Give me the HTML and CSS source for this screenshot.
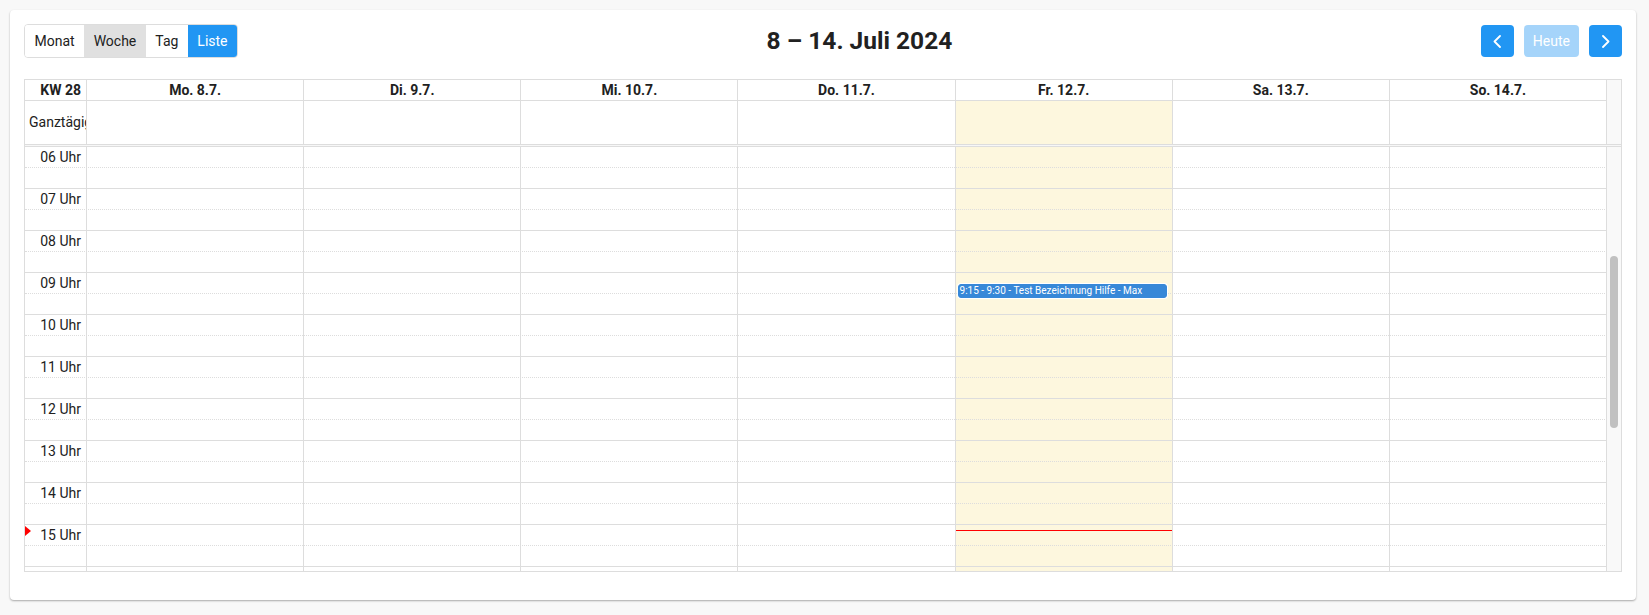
FILE: index.html
```html
<!DOCTYPE html>
<html lang="de">
<head>
<meta charset="utf-8">
<title>Kalender</title>
<link rel="stylesheet" href="styles.css">
</head>
<body>
<div class="page">
  <div class="card">
    <div class="toolbar">
      <div class="btn-group">
        <button class="vbtn">Monat</button>
        <button class="vbtn active">Woche</button>
        <button class="vbtn">Tag</button>
        <button class="vbtn primary">Liste</button>
      </div>
      <h2 class="title">8 – 14. Juli 2024</h2>
      <div class="nav">
        <button class="nbtn icon" aria-label="zurück"><svg width="8" height="13" viewBox="0 0 8 13"><polyline points="7,1 1.5,6.5 7,12" fill="none" stroke="#fff" stroke-width="1.8" stroke-linecap="round" stroke-linejoin="round"/></svg></button>
        <button class="nbtn heute" disabled>Heute</button>
        <button class="nbtn icon" aria-label="vor"><svg width="8" height="13" viewBox="0 0 8 13"><polyline points="1,1 6.5,6.5 1,12" fill="none" stroke="#fff" stroke-width="1.8" stroke-linecap="round" stroke-linejoin="round"/></svg></button>
      </div>
    </div>

    <div class="cal">
      <div class="head">
        <div class="head-gutter"></div>
        <div class="hcell axis">KW 28</div>
        <div class="hcell">Mo. 8.7.</div>
        <div class="hcell">Di. 9.7.</div>
        <div class="hcell">Mi. 10.7.</div>
        <div class="hcell">Do. 11.7.</div>
        <div class="hcell">Fr. 12.7.</div>
        <div class="hcell">Sa. 13.7.</div>
        <div class="hcell">So. 14.7.</div>
        <div class="acell axis">Ganztägig</div>
        <div class="acell"></div>
        <div class="acell"></div>
        <div class="acell"></div>
        <div class="acell"></div>
        <div class="acell today"></div>
        <div class="acell"></div>
        <div class="acell"></div>
      </div>
      <div class="divider"></div>
      <div class="body">
        <div class="slots">
          <div class="cols">
            <div class="col axis-col"><div class="now-arrow"></div></div>
            <div class="col"></div>
            <div class="col"></div>
            <div class="col"></div>
            <div class="col"></div>
            <div class="col today">
              <div class="event">9:15 - 9:30 - Test Bezeichnung Hilfe - Max</div>
              <div class="now-line"></div>
            </div>
            <div class="col"></div>
            <div class="col"></div>
          </div>
          <div class="lines">
            <div class="slot"><div class="label">06 Uhr</div></div>
            <div class="slot half"></div>
            <div class="slot"><div class="label">07 Uhr</div></div>
            <div class="slot half"></div>
            <div class="slot"><div class="label">08 Uhr</div></div>
            <div class="slot half"></div>
            <div class="slot"><div class="label">09 Uhr</div></div>
            <div class="slot half"></div>
            <div class="slot"><div class="label">10 Uhr</div></div>
            <div class="slot half"></div>
            <div class="slot"><div class="label">11 Uhr</div></div>
            <div class="slot half"></div>
            <div class="slot"><div class="label">12 Uhr</div></div>
            <div class="slot half"></div>
            <div class="slot"><div class="label">13 Uhr</div></div>
            <div class="slot half"></div>
            <div class="slot"><div class="label">14 Uhr</div></div>
            <div class="slot half"></div>
            <div class="slot"><div class="label">15 Uhr</div></div>
            <div class="slot half"></div>
            <div class="slot"></div>
          </div>
        </div>
        <div class="scroll-gutter"><div class="thumb"></div></div>
      </div>
    </div>
  </div>
</div>
</body>
</html>
```

FILE: styles.css
```css
* { box-sizing: border-box; }

html, body {
  margin: 0;
  padding: 0;
  background: #f8f8f8;
  font-family: Roboto, "Liberation Sans", Arial, sans-serif;
  color: #212121;
}

.page {
  padding: 10px;
}

.card {
  width: 1626px;
  background: #fff;
  border-radius: 4px;
  box-shadow: 0 1px 2px rgba(0, 0, 0, 0.32);
  padding: 14px 14px 28px;
}

/* Toolbar */
.toolbar {
  display: flex;
  justify-content: space-between;
  align-items: center;
  height: 34px;
  margin-bottom: 21px;
}

.btn-group {
  display: flex;
  height: 34px;
  border: 1px solid #ddd;
  border-radius: 4px;
  overflow: hidden;
}

.vbtn {
  font-family: inherit;
  font-size: 14px;
  color: #212121;
  background: #fff;
  border: 0;
  margin: 0;
  padding: 0 9.5px;
  height: 32px;
  line-height: 32px;
}

.vbtn.active {
  background: #e0e0e0;
}

.vbtn.primary {
  background: #2196f3;
  color: #fff;
}

.title {
  margin: 0;
  font-size: 24.5px;
  font-weight: 700;
  line-height: 34px;
  color: #212121;
}

.nav {
  display: flex;
  gap: 10px;
  align-items: center;
}

.nbtn {
  font-family: inherit;
  font-size: 14px;
  height: 32px;
  border: 0;
  margin: 0;
  border-radius: 4px;
  background: #2196f3;
  color: #fff;
  display: flex;
  align-items: center;
  justify-content: center;
}

.nbtn.icon {
  width: 33px;
  padding: 0;
}

.nbtn.heute {
  padding: 0 9px;
  opacity: 0.4;
}

/* Calendar */
.cal {
  border: 1px solid #ddd;
}

.head {
  display: grid;
  grid-template-columns: 62px repeat(7, 1fr) 14px;
  grid-template-rows: 21px 43px;
  border-bottom: 1px solid #ddd;
}

.head-gutter {
  grid-column: 9;
  grid-row: 1 / 3;
  background: #f9f9f9;
}

.hcell {
  height: 21px;
  line-height: 20px;
  border-bottom: 1px solid #ddd;
  border-right: 1px solid #ddd;
  font-size: 14px;
  font-weight: 700;
  text-align: center;
  white-space: nowrap;
  overflow: hidden;
}

.hcell.axis {
  text-align: right;
  padding-right: 5px;
}

.acell {
  height: 43px;
  border-right: 1px solid #ddd;
}

.acell.axis {
  font-size: 14px;
  line-height: 43px;
  padding-left: 4px;
  white-space: nowrap;
  overflow: hidden;
}

.today {
  background: #fdf7de;
}

.divider {
  height: 2px;
  background: #f7f7f7;
  border-bottom: 1px solid #ddd;
}

.body {
  display: flex;
  height: 424px;
}

.slots {
  flex: 1;
  display: grid;
  grid-template-columns: 1fr;
  grid-template-rows: 1fr;
  overflow: hidden;
  position: relative;
  z-index: 0;
}

.cols {
  grid-area: 1 / 1;
  display: grid;
  grid-template-columns: 62px repeat(7, 1fr);
}

.col {
  border-right: 1px solid #ddd;
  position: relative;
}

.lines {
  grid-area: 1 / 1;
  display: flex;
  flex-direction: column;
  z-index: 1;
}

.slot {
  flex: none;
  height: 21px;
  border-bottom: 1px dotted #ddd;
}

.slot.half {
  border-bottom: 1px solid #ddd;
}

.label {
  width: 61px;
  padding-right: 5px;
  text-align: right;
  font-size: 14px;
  line-height: 20px;
  white-space: nowrap;
}

.event {
  position: absolute;
  z-index: 3;
  top: 137px;
  left: 2px;
  right: 5px;
  height: 14px;
  background: #3788d8;
  border: 1px solid #3788d8;
  border-radius: 3px;
  box-shadow: 0 0 0 1px #fff;
  color: #fff;
  font-size: 10px;
  line-height: 12px;
  padding: 0 1px;
  white-space: nowrap;
  overflow: hidden;
}

.now-line {
  position: absolute;
  z-index: 3;
  top: 383px;
  left: 0;
  right: 0;
  height: 0;
  border-top: 1px solid #f00;
}

.now-arrow {
  position: absolute;
  z-index: 3;
  top: 379px;
  left: 0;
  width: 0;
  height: 0;
  border-style: solid;
  border-color: transparent transparent transparent #f00;
  border-width: 5px 0 5px 6px;
}

.scroll-gutter {
  flex: none;
  width: 14px;
  background: #f9f9f9;
  padding-top: 109px;
  padding-left: 3px;
}

.thumb {
  width: 8px;
  height: 172px;
  border-radius: 4px;
  background: #c1c1c1;
}
```
